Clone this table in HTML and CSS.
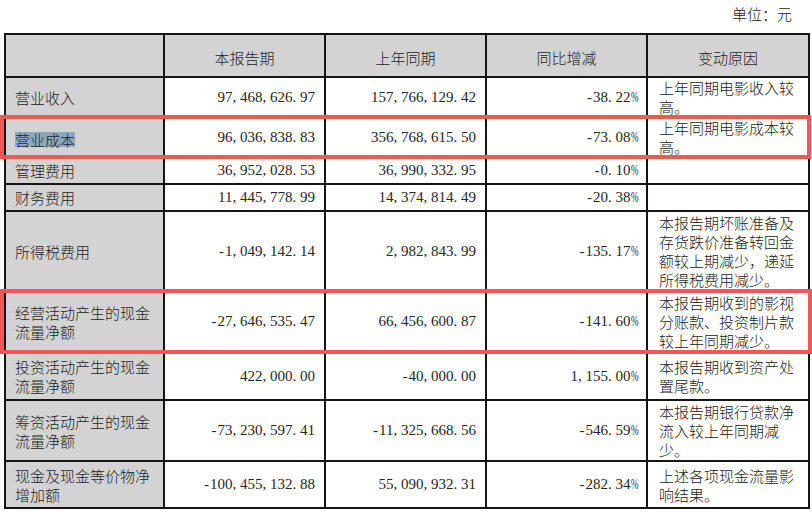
FILE: index.html
```html
<!DOCTYPE html>
<html lang="zh-CN">
<head>
<meta charset="utf-8">
<title>主要财务数据变动</title>
<link rel="stylesheet" href="styles.css">
</head>
<body>
<div class="page">
  <div class="unit">单位：元</div>
  <table class="fin">
    <colgroup>
      <col class="w1"><col class="w2"><col class="w3"><col class="w4"><col class="w5">
    </colgroup>
    <tr class="hd">
      <th></th><th>本报告期</th><th>上年同期</th><th>同比增减</th><th>变动原因</th>
    </tr>
    <tr class="r40">
      <td class="lbl">营业收入</td>
      <td class="n">97<span class="c">,</span>468<span class="c">,</span>626<span class="c">.</span>97</td>
      <td class="n">157<span class="c">,</span>766<span class="c">,</span>129<span class="c">.</span>42</td>
      <td class="n pcol"><span class="h">-</span>38<span class="c">.</span>22<span class="pc">%</span></td>
      <td class="why">上年同期电影收入较高。</td>
    </tr>
    <tr class="r40">
      <td class="lbl"><span class="sel">营业成本</span></td>
      <td class="n">96<span class="c">,</span>036<span class="c">,</span>838<span class="c">.</span>83</td>
      <td class="n">356<span class="c">,</span>768<span class="c">,</span>615<span class="c">.</span>50</td>
      <td class="n pcol"><span class="h">-</span>73<span class="c">.</span>08<span class="pc">%</span></td>
      <td class="why">上年同期电影成本较高。</td>
    </tr>
    <tr class="r27">
      <td class="lbl">管理费用</td>
      <td class="n">36<span class="c">,</span>952<span class="c">,</span>028<span class="c">.</span>53</td>
      <td class="n">36<span class="c">,</span>990<span class="c">,</span>332<span class="c">.</span>95</td>
      <td class="n pcol"><span class="h">-</span>0<span class="c">.</span>10<span class="pc">%</span></td>
      <td class="why"></td>
    </tr>
    <tr class="r27">
      <td class="lbl">财务费用</td>
      <td class="n">11<span class="c">,</span>445<span class="c">,</span>778<span class="c">.</span>99</td>
      <td class="n">14<span class="c">,</span>374<span class="c">,</span>814<span class="c">.</span>49</td>
      <td class="n pcol"><span class="h">-</span>20<span class="c">.</span>38<span class="pc">%</span></td>
      <td class="why"></td>
    </tr>
    <tr class="r80">
      <td class="lbl">所得税费用</td>
      <td class="n"><span class="h">-</span>1<span class="c">,</span>049<span class="c">,</span>142<span class="c">.</span>14</td>
      <td class="n">2<span class="c">,</span>982<span class="c">,</span>843<span class="c">.</span>99</td>
      <td class="n pcol"><span class="h">-</span>135<span class="c">.</span>17<span class="pc">%</span></td>
      <td class="why">本报告期坏账准备及存货跌价准备转回金额较上期减少，递延所得税费用减少。</td>
    </tr>
    <tr class="r61">
      <td class="lbl">经营活动产生的现金流量净额</td>
      <td class="n"><span class="h">-</span>27<span class="c">,</span>646<span class="c">,</span>535<span class="c">.</span>47</td>
      <td class="n">66<span class="c">,</span>456<span class="c">,</span>600<span class="c">.</span>87</td>
      <td class="n pcol"><span class="h">-</span>141<span class="c">.</span>60<span class="pc">%</span></td>
      <td class="why">本报告期收到的影视分账款、投资制片款较上年同期减少。</td>
    </tr>
    <tr class="r48">
      <td class="lbl">投资活动产生的现金流量净额</td>
      <td class="n">422<span class="c">,</span>000<span class="c">.</span>00</td>
      <td class="n"><span class="h">-</span>40<span class="c">,</span>000<span class="c">.</span>00</td>
      <td class="n pcol">1<span class="c">,</span>155<span class="c">.</span>00<span class="pc">%</span></td>
      <td class="why">本报告期收到资产处置尾款。</td>
    </tr>
    <tr class="r61">
      <td class="lbl">筹资活动产生的现金流量净额</td>
      <td class="n"><span class="h">-</span>73<span class="c">,</span>230<span class="c">,</span>597<span class="c">.</span>41</td>
      <td class="n"><span class="h">-</span>11<span class="c">,</span>325<span class="c">,</span>668<span class="c">.</span>56</td>
      <td class="n pcol"><span class="h">-</span>546<span class="c">.</span>59<span class="pc">%</span></td>
      <td class="why">本报告期银行贷款净流入较上年同期减少。</td>
    </tr>
    <tr class="r47">
      <td class="lbl">现金及现金等价物净增加额</td>
      <td class="n"><span class="h">-</span>100<span class="c">,</span>455<span class="c">,</span>132<span class="c">.</span>88</td>
      <td class="n">55<span class="c">,</span>090<span class="c">,</span>932<span class="c">.</span>31</td>
      <td class="n pcol"><span class="h">-</span>282<span class="c">.</span>34<span class="pc">%</span></td>
      <td class="why">上述各项现金流量影响结果。</td>
    </tr>
  </table>
  <div class="mark mark1"></div>
  <div class="mark mark2"></div>
</div>
</body>
</html>
```

FILE: styles.css
```css
html, body {
  margin: 0;
  padding: 0;
  background: #ffffff;
}

body {
  font-family: "Noto Sans CJK SC", "Noto Sans", sans-serif;
  font-weight: 300;
  font-size: 15px;
  color: #222222;
}

.page {
  position: relative;
  width: 812px;
  height: 512px;
  overflow: hidden;
}

.unit {
  height: 33px;
  line-height: 28px;
  text-align: right;
  padding-right: 20px;
  box-sizing: border-box;
}

.fin {
  margin-left: 4px;
  border-collapse: collapse;
  table-layout: fixed;
  width: 804px;
  line-height: 19px;
}

.w1 { width: 159px; }
.w2 { width: 161px; }
.w3 { width: 161px; }
.w4 { width: 161px; }
.w5 { width: 162px; }

.fin th,
.fin td {
  border: 2px solid #151515;
  padding: 0 9px;
  vertical-align: middle;
  overflow: hidden;
}

.fin th {
  background: #d3d3d3;
  font-weight: 300;
  text-align: center;
  height: 38px;
  padding-top: 3px;
}

.r40 td { height: 38px; }
.r27 td { height: 25px; }
.r80 td { height: 78px; }
.r61 td { height: 59px; }
.r48 td { height: 46px; }
.r47 td { height: 45px; }

.fin td.lbl {
  background: #d3d3d3;
  text-align: left;
}

.fin td.n {
  text-align: right;
  font-family: "Liberation Serif", serif;
  font-weight: 400;
  font-size: 15px;
  white-space: nowrap;
  color: #262626;
}

.fin td.pcol {
  padding-right: 8px;
}

.fin td.why {
  text-align: left;
  padding-left: 11px;
  padding-right: 6px;
}

.c { letter-spacing: 3.75px; }

.h {
  padding-left: 1.5px;
  letter-spacing: 1px;
}

.pc {
  display: inline-block;
  width: 7.5px;
  transform: scaleX(0.6);
  transform-origin: left center;
}

.sel {
  display: inline-block;
  height: 15px;
  line-height: 15px;
  background: #8ca8c1;
  vertical-align: middle;
}

.mark {
  position: absolute;
  border: 4px solid #f25656;
  box-sizing: border-box;
}

.mark1 {
  left: 0;
  top: 115px;
  width: 811px;
  height: 44px;
}

.mark2 {
  left: 0;
  top: 289px;
  width: 812px;
  height: 65px;
}
```
